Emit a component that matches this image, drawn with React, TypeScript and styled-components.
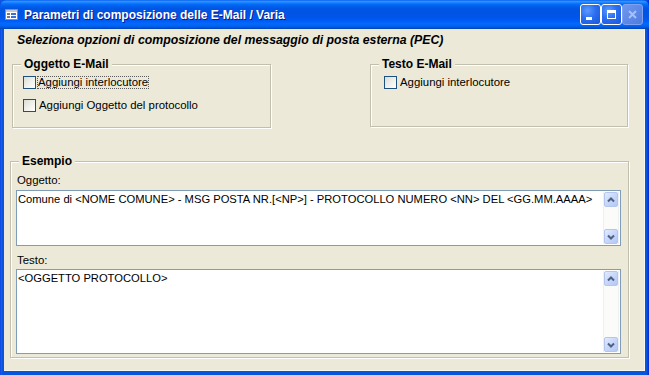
import React from 'react';
import styled, { createGlobalStyle } from 'styled-components';

const GlobalStyle = createGlobalStyle`
  html, body {
    margin: 0;
    padding: 0;
    background: #ECE9D8;
  }
  body {
    font-family: "Liberation Sans", Arial, sans-serif;
    color: #000000;
  }
`;

const Window = styled.div`
  width: 649px;
  height: 375px;
  display: flex;
  flex-direction: column;
  background: linear-gradient(to right, #0831D9 0, #166AEE 1px, #0855DD 2px, #0855DD 647px, #0831D9 648px);
  overflow: hidden;
`;

const TitleBar = styled.div`
  height: 29px;
  flex: none;
  display: flex;
  align-items: center;
  padding: 0 6px 0 5px;
  border-radius: 7px 7px 0 0;
  background: linear-gradient(
    to bottom,
    #0058EE 0%,
    #3593FF 4%,
    #288EFF 7%,
    #127DFF 10%,
    #036FFC 14%,
    #0262EE 20%,
    #0057E5 28%,
    #0054E3 40%,
    #0055EB 60%,
    #005BF5 72%,
    #026AFE 82%,
    #0062EF 90%,
    #0052D6 96%,
    #0040AB 100%
  );
`;

const TitleText = styled.div`
  flex: 1;
  margin-left: 6px;
  font-weight: bold;
  font-size: 12px;
  color: #FFFFFF;
  text-shadow: 1px 1px 0 #0A1883;
  white-space: nowrap;
`;

const TitleButtons = styled.div`
  display: flex;
  margin-top: -1px;
`;

const CaptionButton = styled.div<{ $disabled?: boolean }>`
  width: 21px;
  height: 21px;
  box-sizing: border-box;
  display: flex;
  align-items: center;
  justify-content: center;
  border-radius: 3px;
  border: 1px solid ${p => (p.$disabled ? '#7FA2EE' : '#FFFFFF')};
  background: ${p =>
    p.$disabled
      ? 'linear-gradient(135deg, #6E97EE 0%, #5A86E6 60%, #4F7CE0 100%)'
      : 'radial-gradient(circle at 35% 30%, #5B9BFF 0%, #2A6EF0 45%, #1C55D8 100%)'};
`;

const Body = styled.div`
  flex: 1;
  margin: 0 4px 4px 4px;
  padding: 4px 17px 0 6px;
  background: #ECE9D8;
  display: flex;
  flex-direction: column;
  box-shadow: inset -1px -1px 0 #F7F6F0;
`;

const Heading = styled.div`
  margin-left: 7px;
  font-weight: bold;
  font-style: italic;
  font-size: 12.3px;
  line-height: 14px;
  white-space: nowrap;
`;

const GroupRow = styled.div`
  margin-top: 17px;
  display: flex;
  justify-content: space-between;
  align-items: flex-start;
`;

const Group = styled.div<{ $width: number; $height: number; $padLeft: number; $inset?: number }>`
  position: relative;
  box-sizing: border-box;
  width: ${p => p.$width}px;
  height: ${p => p.$height}px;
  margin-left: ${p => p.$inset ?? 0}px;
  padding: 11px 0 0 ${p => p.$padLeft}px;
  border: 1px solid #C2BFAF;
  box-shadow: inset 1px 1px 0 #FFFFFF, 1px 1px 0 #FFFFFF;
`;

const Legend = styled.div`
  position: absolute;
  top: -8px;
  left: 8px;
  padding: 0 3px;
  background: #ECE9D8;
  font-weight: bold;
  font-size: 12px;
  line-height: 14px;
  white-space: nowrap;
`;

const OptionList = styled.div`
  display: flex;
  flex-direction: column;
  gap: 10px;
`;

const Option = styled.div`
  display: flex;
  align-items: center;
  height: 13px;
`;

const Check = styled.div`
  width: 13px;
  height: 13px;
  flex: none;
  box-sizing: border-box;
  border: 1px solid #1C5180;
  background: linear-gradient(135deg, #DCDCD7 0%, #F0F0EA 50%, #FFFFFF 100%);
`;

const OptionLabel = styled.span<{ $focused?: boolean }>`
  margin-left: ${p => (p.$focused ? '1px' : '2px')};
  padding: 0 1px;
  font-size: 11.4px;
  line-height: 13px;
  white-space: nowrap;
  outline: ${p => (p.$focused ? '1px dotted #5A5A5A' : 'none')};
  outline-offset: -1px;
`;

const Example = styled.div`
  position: relative;
  box-sizing: border-box;
  width: 619px;
  height: 197px;
  margin-top: 33px;
  padding: 12px 7px 0 5px;
  border: 1px solid #C2BFAF;
  box-shadow: inset 1px 1px 0 #FFFFFF, 1px 1px 0 #FFFFFF;
  display: flex;
  flex-direction: column;
`;

const FieldLabel = styled.div<{ $gap: number }>`
  margin: ${p => p.$gap}px 0 0 1px;
  font-size: 11.4px;
  line-height: 13px;
`;

const TextBox = styled.div<{ $height: number; $gap: number }>`
  box-sizing: border-box;
  height: ${p => p.$height}px;
  margin-top: ${p => p.$gap}px;
  display: flex;
  border: 1px solid #7F9DB9;
  background: #FFFFFF;
`;

const TextContent = styled.div`
  flex: 1;
  padding: 2px 2px 0 1px;
  font-size: 11.2px;
  line-height: 13px;
  white-space: nowrap;
  overflow: hidden;
`;

const ScrollBar = styled.div`
  width: 16px;
  flex: none;
  margin: 1px 1px 1px 0;
  display: flex;
  flex-direction: column;
  justify-content: space-between;
  background: #FBFBF9;
  border-left: 1px solid #EEF0F4;
  border-right: 1px solid #EEF0F4;
  box-sizing: border-box;
`;

const ScrollButton = styled.div`
  height: 15px;
  box-sizing: border-box;
  display: flex;
  align-items: center;
  justify-content: center;
  border: 1px solid #B4C6EE;
  border-radius: 2px;
  background: linear-gradient(135deg, #E2EBFE 0%, #C7D7FA 50%, #B4C8F5 100%);
`;

const Chevron = ({ down }: { down?: boolean }) => (
  <svg width="8" height="6" viewBox="0 0 8 6">
    <polyline
      points={down ? '1,1.5 4,4.5 7,1.5' : '1,4.5 4,1.5 7,4.5'}
      fill="none"
      stroke="#4D6185"
      strokeWidth="2"
    />
  </svg>
);

const Scroll = () => (
  <ScrollBar>
    <ScrollButton>
      <Chevron />
    </ScrollButton>
    <ScrollButton>
      <Chevron down />
    </ScrollButton>
  </ScrollBar>
);

const FormIcon = () => (
  <svg width="13" height="11" viewBox="0 0 13 11">
    <rect x="0.5" y="0.5" width="12" height="10" fill="#FFFFFF" stroke="#8C8C8C" />
    <rect x="1" y="1" width="11" height="2" fill="#C9C9C9" />
    <rect x="2" y="4" width="3" height="2" fill="#7A7A7A" />
    <rect x="6" y="4" width="5" height="2" fill="#3C6FD8" />
    <rect x="2" y="7" width="3" height="2" fill="#7A7A7A" />
    <rect x="6" y="7" width="5" height="2" fill="#3C6FD8" />
  </svg>
);

const MinIcon = () => (
  <svg width="13" height="13" viewBox="0 0 13 13">
    <rect x="2" y="9" width="6" height="3" fill="#FFFFFF" />
  </svg>
);

const MaxIcon = () => (
  <svg width="13" height="13" viewBox="0 0 13 13">
    <rect x="2.5" y="2.5" width="8" height="8" fill="none" stroke="#FFFFFF" />
    <rect x="2" y="2" width="9" height="3" fill="#FFFFFF" />
  </svg>
);

const CloseIcon = () => (
  <svg width="13" height="13" viewBox="0 0 13 13">
    <path d="M3 3 L10 10 M10 3 L3 10" stroke="#A9C0F0" strokeWidth="2" />
  </svg>
);

export default function App() {
  return (
    <>
      <GlobalStyle />
      <Window>
        <TitleBar>
          <FormIcon />
          <TitleText>Parametri di composizione delle E-Mail / Varia</TitleText>
          <TitleButtons>
            <CaptionButton>
              <MinIcon />
            </CaptionButton>
            <CaptionButton>
              <MaxIcon />
            </CaptionButton>
            <CaptionButton $disabled>
              <CloseIcon />
            </CaptionButton>
          </TitleButtons>
        </TitleBar>
        <Body>
          <Heading>Seleziona opzioni di composizione del messaggio di posta esterna (PEC)</Heading>
          <GroupRow>
            <Group $width={259} $height={64} $padLeft={10} $inset={2}>
              <Legend>Oggetto E-Mail</Legend>
              <OptionList>
                <Option>
                  <Check />
                  <OptionLabel $focused>Aggiungi interlocutore</OptionLabel>
                </Option>
                <Option>
                  <Check />
                  <OptionLabel>Aggiungi Oggetto del protocollo</OptionLabel>
                </Option>
              </OptionList>
            </Group>
            <Group $width={258} $height={63} $padLeft={13}>
              <Legend>Testo E-Mail</Legend>
              <OptionList>
                <Option>
                  <Check />
                  <OptionLabel>Aggiungi interlocutore</OptionLabel>
                </Option>
              </OptionList>
            </Group>
          </GroupRow>
          <Example>
            <Legend>Esempio</Legend>
            <FieldLabel $gap={0}>Oggetto:</FieldLabel>
            <TextBox $height={56} $gap={3}>
              <TextContent>
                Comune di &lt;NOME COMUNE&gt; - MSG POSTA NR.[&lt;NP&gt;] - PROTOCOLLO NUMERO &lt;NN&gt; DEL &lt;GG.MM.AAAA&gt;
              </TextContent>
              <Scroll />
            </TextBox>
            <FieldLabel $gap={8}>Testo:</FieldLabel>
            <TextBox $height={85} $gap={2}>
              <TextContent>&lt;OGGETTO PROTOCOLLO&gt;</TextContent>
              <Scroll />
            </TextBox>
          </Example>
        </Body>
      </Window>
    </>
  );
}
